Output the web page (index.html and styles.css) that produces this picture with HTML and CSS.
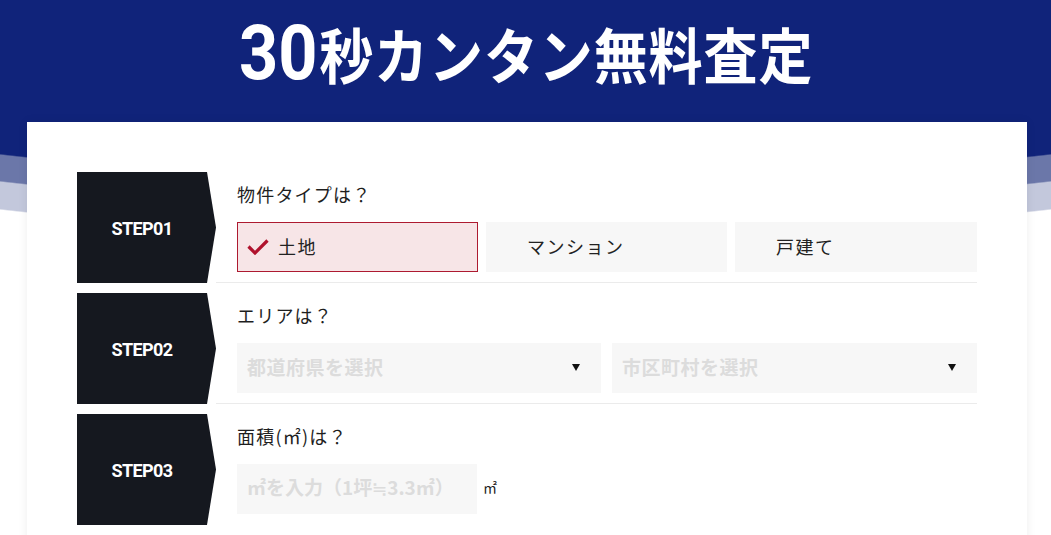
FILE: index.html
```html
<!DOCTYPE html>
<html lang="ja">
<head>
<meta charset="utf-8">
<title>30秒カンタン無料査定</title>
<link rel="stylesheet" href="styles.css">
</head>
<body>
<section class="hero">
  <h1 class="title"><span class="title-inner"><span class="num">30</span>秒カンタン無料査定</span></h1>
  <div class="card">
    <div class="row">
      <div class="step"><span>STEP01</span></div>
      <div class="body">
        <p class="q">物件タイプは？</p>
        <div class="choices">
          <button class="choice selected">
            <svg class="check" width="22" height="16" viewBox="0 0 22 16"><path d="M1.5 7.5 L8 14 L20.5 1.5" fill="none" stroke="#b0122d" stroke-width="3.2"/></svg>
            土地
          </button>
          <button class="choice">マンション</button>
          <button class="choice">戸建て</button>
        </div>
      </div>
    </div>
    <div class="row">
      <div class="step"><span>STEP02</span></div>
      <div class="body">
        <p class="q">エリアは？</p>
        <div class="selects">
          <div class="select">都道府県を選択<i class="tri"></i></div>
          <div class="select">市区町村を選択<i class="tri"></i></div>
        </div>
      </div>
    </div>
    <div class="row last">
      <div class="step"><span>STEP03</span></div>
      <div class="body">
        <p class="q">面積(㎡)は？</p>
        <div class="area">
          <div class="input">㎡を入力（1坪≒3.3㎡）</div>
          <span class="unit">㎡</span>
        </div>
      </div>
    </div>
  </div>
</section>
</body>
</html>
```
FILE: styles.css
```css
html, body {
  margin: 0;
  padding: 0;
  background: #fff;
}
body {
  font-family: "Noto Sans CJK JP", "Noto Sans", sans-serif;
  color: #222;
}
.hero {
  background:
    radial-gradient(1500px 456px at 50% -272px, #10237a 99.7%, rgba(16,35,122,0) 100%),
    radial-gradient(1500px 456px at 50% -245px, #6b77a9 99.7%, rgba(107,119,169,0) 100%),
    radial-gradient(1500px 456px at 50% -217px, #c3c8dc 99.7%, rgba(195,200,220,0) 100%);
  background-repeat: no-repeat;
  padding-top: 1px;
}
.title {
  margin: 0;
  height: 121px;
  box-sizing: border-box;
  padding-top: 9px;
  text-align: center;
  color: #fff;
  font-weight: 700;
  font-size: 60px;
  line-height: 86px;
  letter-spacing: 1px;
}
.title-inner {
  display: inline-block;
  transform: scaleX(0.9);
  transform-origin: 50% 50%;
  margin-left: 2px;
}
.title .num {
  font-family: Roboto, "Liberation Sans", sans-serif;
  font-weight: 700;
  font-size: 76px;
  letter-spacing: 0;
  margin-right: 2px;
}
.card {
  width: 1000px;
  margin-left: 27px;
  background: #fff;
  box-shadow: 0 0 10px rgba(0,0,0,0.07);
  padding: 50px 50px 40px;
  box-sizing: border-box;
  min-height: 450px;
}
.row {
  display: flex;
  height: 111px;
  margin-bottom: 10px;
}
.step {
  width: 139px;
  flex: none;
  background: #15181f;
  clip-path: polygon(0 0, 130px 0, 139px 50%, 130px 100%, 0 100%);
  display: flex;
  align-items: center;
}
.step span {
  width: 130px;
  text-align: center;
  color: #fff;
  font-family: Roboto, "Liberation Sans", sans-serif;
  font-weight: 700;
  font-size: 18px;
  letter-spacing: -0.6px;
  margin-top: 1px;
}
.body {
  flex: 1;
  padding-left: 21px;
  border-bottom: 1px solid #ebebeb;
}
.row.last .body {
  border-bottom-color: transparent;
}
.q {
  margin: 0;
  padding-top: 10px;
  height: 50px;
  box-sizing: border-box;
  font-size: 18px;
  line-height: 24px;
  letter-spacing: 1.2px;
  font-weight: 400;
  color: #1e1e1e;
}
.choices {
  display: grid;
  grid-template-columns: 241px 241px 242px;
  column-gap: 8px;
}
.choice {
  position: relative;
  height: 50px;
  border: 1px solid transparent;
  background: #f7f7f7;
  font-family: inherit;
  font-size: 18px;
  letter-spacing: 1.5px;
  color: #222;
  text-align: left;
  padding: 0 0 2px 40px;
  margin: 0;
}
.choice.selected {
  background: #f7e5e7;
  border-color: #ad1a30;
}
.check {
  position: absolute;
  left: 9px;
  top: 16px;
}
.selects {
  display: grid;
  grid-template-columns: 364px 365px;
  column-gap: 11px;
}
.select, .input {
  height: 50px;
  background: #f7f7f7;
  display: flex;
  align-items: center;
  padding: 0 0 3px 10px;
  box-sizing: border-box;
  font-size: 19px;
  font-weight: 700;
  color: #dcdcdc;
  letter-spacing: 0.5px;
}
.select {
  justify-content: space-between;
  padding-right: 21px;
}
.tri {
  width: 0;
  height: 0;
  border-left: 4px solid transparent;
  border-right: 4px solid transparent;
  border-top: 7px solid #111;
  margin-top: 2px;
}
.area {
  display: flex;
  align-items: center;
  gap: 6px;
}
.input {
  width: 240px;
  letter-spacing: 0;
}
.unit {
  font-size: 14px;
  color: #222;
  margin-top: -4px;
}
```
